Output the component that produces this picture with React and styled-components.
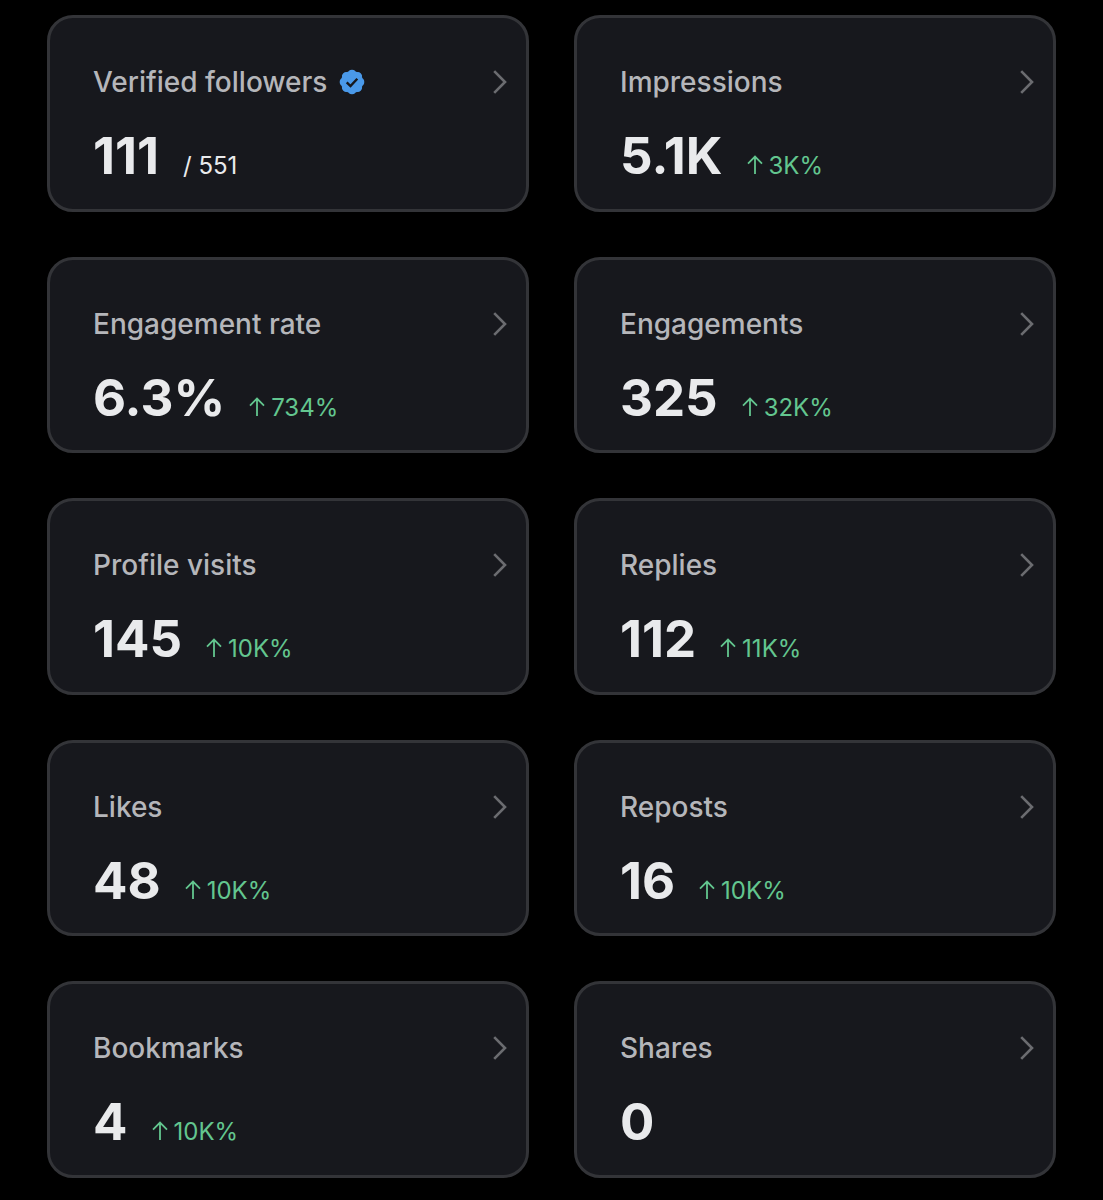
import React from 'react';
import styled, { createGlobalStyle } from 'styled-components';

const GlobalStyle = createGlobalStyle`
  * {
    box-sizing: border-box;
  }
  body {
    margin: 0;
    background: #000;
    color: #e9eaec;
    font-family: Inter, 'Liberation Sans', sans-serif;
  }
`;

const Grid = styled.main`
  display: grid;
  grid-template-columns: 1fr 1fr;
  grid-auto-rows: 1fr;
  gap: 45px;
  min-height: 100vh;
  padding: 15px 47px 22px;
`;

const Card = styled.a`
  display: flex;
  flex-direction: column;
  gap: 24px;
  padding: 44px 18px 20px 43px;
  border: 3px solid #333438;
  border-radius: 26px;
  background: #17181d;
  color: inherit;
  text-decoration: none;
`;

const Header = styled.div`
  display: flex;
  align-items: center;
  justify-content: space-between;
  height: 40px;
`;

const Label = styled.h2`
  display: flex;
  align-items: center;
  gap: 12px;
  margin: 0;
  color: #b5b6ba;
  font-size: 28px;
  font-weight: 500;
  line-height: 40px;
`;

const Figures = styled.div`
  display: flex;
  align-items: baseline;
  gap: 24px;
`;

const Value = styled.span`
  font-size: 51px;
  font-weight: 700;
  line-height: 60px;
`;

const Note = styled.span`
  font-size: 24px;
  font-weight: 400;
  line-height: 32px;
  color: ${props => (props.$up ? '#63c68f' : '#e9eaec')};
`;

const ArrowIcon = styled.svg`
  width: 16px;
  height: 19px;
  margin-right: 6px;
`;

const Arrow = () => (
  <ArrowIcon viewBox="0 0 16 19" fill="none" stroke="currentColor" strokeWidth="1.8" aria-hidden="true">
    <path d="M8 19V1.6M1 8.6l7-7 7 7" />
  </ArrowIcon>
);

const Chevron = () => (
  <svg width="16" height="26" viewBox="0 0 16 26" fill="none" stroke="#6b6c70" strokeWidth="2.6" aria-hidden="true">
    <path d="M2.2 2.2 13 13 2.2 23.8" />
  </svg>
);

// eight shallow lobes around a disc
const lobes = [0, 45, 90, 135, 180, 225, 270, 315];

const VerifiedBadge = () => (
  <svg width="26" height="26" viewBox="-13 -13 26 26" role="img" aria-label="Verified">
    <g fill="#4a99e9">
      <circle r="11.1" />
      {lobes.map(angle => (
        <circle key={angle} cy="-8.3" r="4" transform={`rotate(${angle})`} />
      ))}
    </g>
    <path fill="none" stroke="#17181d" strokeWidth="2.4" d="M-5.3 0.3l3.8 3.8 6.8-7.4" />
  </svg>
);

const metrics = [
  { label: 'Verified followers', value: '111', total: '551', verified: true },
  { label: 'Impressions', value: '5.1K', change: '3K%' },
  { label: 'Engagement rate', value: '6.3%', change: '734%' },
  { label: 'Engagements', value: '325', change: '32K%' },
  { label: 'Profile visits', value: '145', change: '10K%' },
  { label: 'Replies', value: '112', change: '11K%' },
  { label: 'Likes', value: '48', change: '10K%' },
  { label: 'Reposts', value: '16', change: '10K%' },
  { label: 'Bookmarks', value: '4', change: '10K%' },
  { label: 'Shares', value: '0' },
];

const MetricCard = ({ label, value, total, change, verified }) => (
  <Card href="#">
    <Header>
      <Label>
        {label}
        {verified && <VerifiedBadge />}
      </Label>
      <Chevron />
    </Header>
    <Figures>
      <Value>{value}</Value>
      {total && <Note>/ {total}</Note>}
      {change && (
        <Note $up>
          <Arrow />
          {change}
        </Note>
      )}
    </Figures>
  </Card>
);

const App = () => (
  <>
    <GlobalStyle />
    <Grid>
      {metrics.map(metric => (
        <MetricCard key={metric.label} {...metric} />
      ))}
    </Grid>
  </>
);

export default App;
